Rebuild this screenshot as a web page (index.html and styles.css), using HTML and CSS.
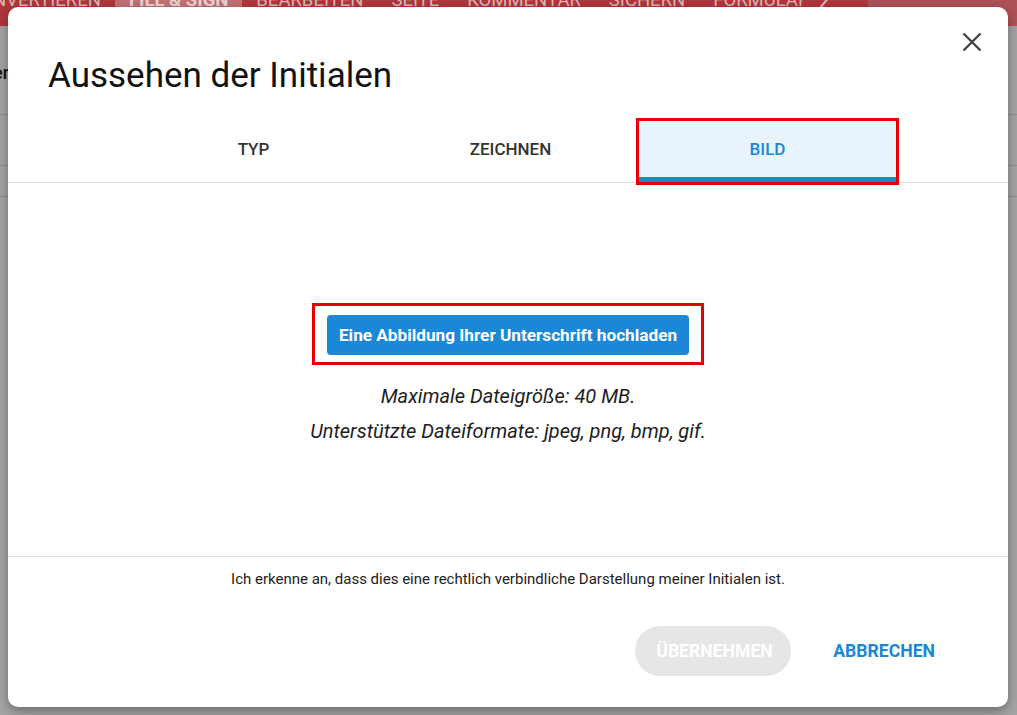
FILE: index.html
```html
<!DOCTYPE html>
<html lang="de">
<head>
<meta charset="utf-8">
<title>Aussehen der Initialen</title>
<link rel="stylesheet" href="styles.css">
</head>
<body>
<div class="page">
  <header class="appbar">
    <nav class="appnav">
      <div class="navclip">
        <span class="navitem first">KONVERTIEREN</span>
        <span class="navitem active">FILL &amp; SIGN</span>
        <span class="navitem">BEARBEITEN</span>
        <span class="navitem">SEITE</span>
        <span class="navitem">KOMMENTAR</span>
        <span class="navitem">SICHERN</span>
        <span class="navitem">FORMULAR</span>
      </div>
      <span class="chev"><svg width="14" height="20" viewBox="0 0 14 20"><path d="M2 -16 L12 -4 L2 8" fill="none" stroke="#e2b6b7" stroke-width="2"/></svg></span>
    </nav>
    <div class="appside"></div>
  </header>
  <div class="bgbody">
    <div class="bgrow r1"><span class="bgtext">er</span></div>
    <div class="bgrow r2"></div>
    <div class="bgrow r3"></div>
  </div>
</div>

<div class="modal">
  <button class="close" aria-label="Schließen">
    <svg width="20" height="20" viewBox="0 0 20 20"><path d="M1.5 1.5 L18.5 18.5 M18.5 1.5 L1.5 18.5" stroke="#444" stroke-width="2.4" fill="none"/></svg>
  </button>
  <h1 class="title">Aussehen der Initialen</h1>
  <div class="tabbar">
    <div class="tabs">
      <div class="tab">TYP</div>
      <div class="tab">ZEICHNEN</div>
      <div class="tab selected">BILD</div>
    </div>
  </div>
  <div class="content">
    <div class="highlight">
      <button class="upload">Eine Abbildung Ihrer Unterschrift hochladen</button>
    </div>
    <p class="info">Maximale Dateigröße: 40 MB.</p>
    <p class="info">Unterstützte Dateiformate: jpeg, png, bmp, gif.</p>
  </div>
  <div class="footer">
    <p class="notice">Ich erkenne an, dass dies eine rechtlich verbindliche Darstellung meiner Initialen ist.</p>
    <div class="actions">
      <button class="btn apply">ÜBERNEHMEN</button>
      <button class="btn cancel">ABBRECHEN</button>
    </div>
  </div>
</div>
</body>
</html>
```

FILE: styles.css
```css
* { box-sizing: border-box; }
html, body { margin: 0; padding: 0; }
body {
  width: 1017px;
  height: 715px;
  overflow: hidden;
  background: #a4a4a4;
  font-family: Roboto, "Liberation Sans", sans-serif;
  position: relative;
}

.page { width: 1017px; height: 715px; }

.appbar {
  height: 26px;
  display: flex;
  overflow: hidden;
}
.appnav {
  flex: 0 0 868px;
  background: #b1363b;
  display: flex;
  align-items: flex-start;
  overflow: hidden;
}
.navclip {
  display: flex;
  width: 848px;
  overflow: hidden;
  margin-left: -45px;
  flex: 0 0 auto;
}
.navitem {
  flex: 0 0 auto;
  height: 36px;
  margin-top: -10px;
  padding: 0 14px;
  line-height: 20px;
  font-size: 18.5px;
  font-weight: 400;
  color: #e0b4b5;
  white-space: nowrap;
}
.navitem.active {
  background: #c17275;
  font-weight: 700;
  color: #ecd2d3;
}
.chev { flex: 0 0 auto; margin-left: 15px; height: 20px; }
.appside { flex: 1; background: #ad5357; }

.bgbody { display: flex; flex-direction: column; }
.bgrow { border-bottom: 1px solid #8f8f8f; }
.r1 { height: 89px; display: flex; align-items: center; }
.r2 { height: 51px; }
.r3 { height: 31px; }
.bgtext {
  font-size: 18px;
  font-weight: 500;
  color: #111;
  margin-left: -7px;
  margin-top: 4px;
}

.modal {
  position: absolute;
  left: 8px;
  top: 7px;
  width: 1000px;
  height: 700px;
  background: #fff;
  border-radius: 10px;
  box-shadow: 0 4px 12px rgba(0, 0, 0, 0.35);
  display: flex;
  flex-direction: column;
}

.close {
  position: absolute;
  right: 26px;
  top: 25px;
  width: 20px;
  height: 20px;
  padding: 0;
  border: 0;
  background: none;
  display: flex;
}

.title {
  margin: 48px 0 0 40px;
  font-size: 35px;
  font-weight: 400;
  line-height: 42px;
  color: #111;
}

.tabbar {
  margin-top: 24px;
  border-bottom: 1px solid #dcdcdc;
}
.tabs {
  display: flex;
  margin-left: 117px;
}
.tab {
  width: 257px;
  height: 61px;
  display: flex;
  align-items: center;
  justify-content: center;
  padding-bottom: 5px;
  font-size: 17px;
  font-weight: 500;
  color: #333;
}
.tab.selected {
  background: #e8f3fc;
  color: #1a87d4;
  border-bottom: 5px solid #1a87d4;
  padding-bottom: 0;
  outline: 3px solid #e60000;
  outline-offset: 0;
}

.content {
  flex: 1;
  display: flex;
  flex-direction: column;
  align-items: center;
  padding-top: 120px;
  border-bottom: 1px solid #e2e2e2;
}
.highlight {
  border: 3px solid #e60000;
  padding: 9px 12px 7px 12px;
}
.upload {
  display: block;
  width: 362px;
  height: 40px;
  border: 0;
  border-radius: 4px;
  background: #1a87d7;
  color: #fff;
  font-family: Roboto, "Liberation Sans", sans-serif;
  font-size: 17.2px;
  font-weight: 700;
  padding: 0;
}
.info {
  margin: 0;
  font-size: 20px;
  font-style: italic;
  line-height: 35px;
  color: #1e1e1e;
}
.info:first-of-type { margin-top: 14px; }

.footer {
  flex: 0 0 150px;
  display: flex;
  flex-direction: column;
  align-items: center;
}
.notice {
  margin: 13px 0 0;
  font-size: 15px;
  line-height: 18px;
  color: #222;
}
.actions {
  align-self: flex-end;
  display: flex;
  gap: 21px;
  margin: 38px 52px 0 0;
}
.btn {
  height: 50px;
  border: 0;
  border-radius: 25px;
  padding: 0 21px;
  font-family: Roboto, "Liberation Sans", sans-serif;
  font-size: 17.6px;
  font-weight: 700;
  background: none;
}
.apply { background: #e6e6e6; color: #fff; width: 156px; }
.cancel { color: #1a87d4; }
```
